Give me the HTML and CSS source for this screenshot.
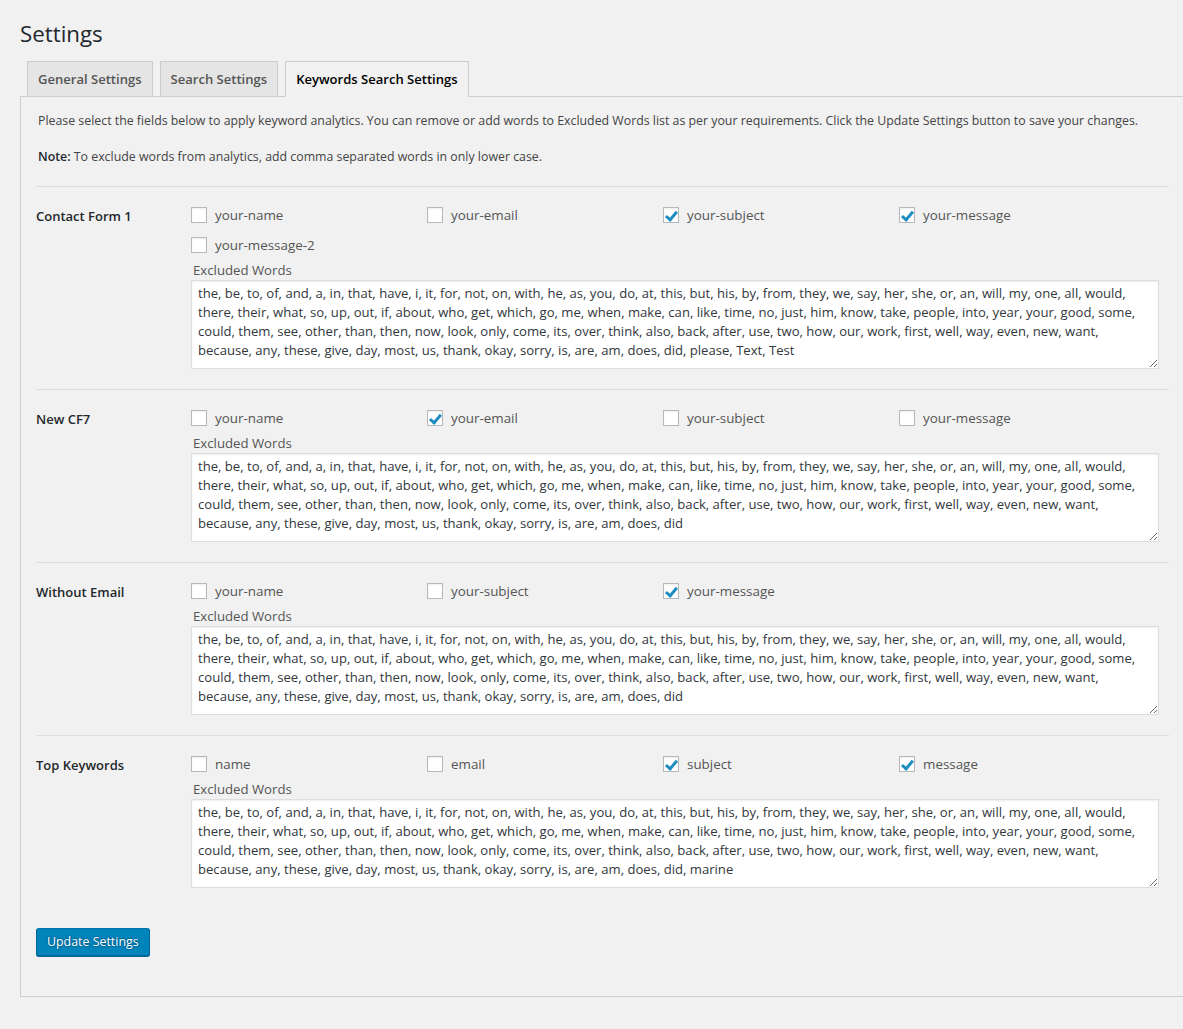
FILE: index.html
```html
<!DOCTYPE html>
<html lang="en">
<head>
	<meta charset="UTF-8">
	<title>Settings</title>
	<link rel="stylesheet" href="styles.css">
</head>
<body>
	<div class="wrap">
		<h1 class="page-title">Settings</h1>
		<div class="tabs">
			<a class="tab" href="#">General Settings</a>
			<a class="tab" href="#">Search Settings</a>
			<a class="tab active" href="#">Keywords Search Settings</a>
		</div>
		<div class="panel">
			<p class="intro">Please select the fields below to apply keyword analytics. You can remove or add words to Excluded Words list as per your requirements. Click the Update Settings button to save your changes.</p>
			<p class="intro"><strong>Note:</strong> To exclude words from analytics, add comma separated words in only lower case.</p>

			<form class="keywords-form">
				<div class="form-row">
					<div class="form-label">Contact Form 1</div>
					<div class="form-fields">
						<div class="field-grid">
							<label class="field"><input type="checkbox">your-name</label>
							<label class="field"><input type="checkbox">your-email</label>
							<label class="field"><input type="checkbox" checked>your-subject</label>
							<label class="field"><input type="checkbox" checked>your-message</label>
							<label class="field"><input type="checkbox">your-message-2</label>
						</div>
						<div class="words-label">Excluded Words</div>
						<textarea class="words">the, be, to, of, and, a, in, that, have, i, it, for, not, on, with, he, as, you, do, at, this, but, his, by, from, they, we, say, her, she, or, an, will, my, one, all, would,
there, their, what, so, up, out, if, about, who, get, which, go, me, when, make, can, like, time, no, just, him, know, take, people, into, year, your, good, some,
could, them, see, other, than, then, now, look, only, come, its, over, think, also, back, after, use, two, how, our, work, first, well, way, even, new, want,
because, any, these, give, day, most, us, thank, okay, sorry, is, are, am, does, did, please, Text, Test</textarea>
					</div>
				</div>

				<div class="form-row">
					<div class="form-label">New CF7</div>
					<div class="form-fields">
						<div class="field-grid">
							<label class="field"><input type="checkbox">your-name</label>
							<label class="field"><input type="checkbox" checked>your-email</label>
							<label class="field"><input type="checkbox">your-subject</label>
							<label class="field"><input type="checkbox">your-message</label>
						</div>
						<div class="words-label">Excluded Words</div>
						<textarea class="words">the, be, to, of, and, a, in, that, have, i, it, for, not, on, with, he, as, you, do, at, this, but, his, by, from, they, we, say, her, she, or, an, will, my, one, all, would,
there, their, what, so, up, out, if, about, who, get, which, go, me, when, make, can, like, time, no, just, him, know, take, people, into, year, your, good, some,
could, them, see, other, than, then, now, look, only, come, its, over, think, also, back, after, use, two, how, our, work, first, well, way, even, new, want,
because, any, these, give, day, most, us, thank, okay, sorry, is, are, am, does, did</textarea>
					</div>
				</div>

				<div class="form-row">
					<div class="form-label">Without Email</div>
					<div class="form-fields">
						<div class="field-grid">
							<label class="field"><input type="checkbox">your-name</label>
							<label class="field"><input type="checkbox">your-subject</label>
							<label class="field"><input type="checkbox" checked>your-message</label>
						</div>
						<div class="words-label">Excluded Words</div>
						<textarea class="words">the, be, to, of, and, a, in, that, have, i, it, for, not, on, with, he, as, you, do, at, this, but, his, by, from, they, we, say, her, she, or, an, will, my, one, all, would,
there, their, what, so, up, out, if, about, who, get, which, go, me, when, make, can, like, time, no, just, him, know, take, people, into, year, your, good, some,
could, them, see, other, than, then, now, look, only, come, its, over, think, also, back, after, use, two, how, our, work, first, well, way, even, new, want,
because, any, these, give, day, most, us, thank, okay, sorry, is, are, am, does, did</textarea>
					</div>
				</div>

				<div class="form-row">
					<div class="form-label">Top Keywords</div>
					<div class="form-fields">
						<div class="field-grid">
							<label class="field"><input type="checkbox">name</label>
							<label class="field"><input type="checkbox">email</label>
							<label class="field"><input type="checkbox" checked>subject</label>
							<label class="field"><input type="checkbox" checked>message</label>
						</div>
						<div class="words-label">Excluded Words</div>
						<textarea class="words">the, be, to, of, and, a, in, that, have, i, it, for, not, on, with, he, as, you, do, at, this, but, his, by, from, they, we, say, her, she, or, an, will, my, one, all, would,
there, their, what, so, up, out, if, about, who, get, which, go, me, when, make, can, like, time, no, just, him, know, take, people, into, year, your, good, some,
could, them, see, other, than, then, now, look, only, come, its, over, think, also, back, after, use, two, how, our, work, first, well, way, even, new, want,
because, any, these, give, day, most, us, thank, okay, sorry, is, are, am, does, did, marine</textarea>
					</div>
				</div>

				<p class="submit"><button type="button" class="button-primary">Update Settings</button></p>
			</form>
		</div>
	</div>
</body>
</html>
```

FILE: styles.css
```css
html, body {
	margin: 0;
	padding: 0;
	background: #f1f1f1;
}
body {
	font-family: "Open Sans", "Noto Sans", sans-serif;
	font-size: 12.35px;
	color: #444;
	overflow: hidden;
}
.wrap {
	padding: 10px 0 0 20px;
}
.page-title {
	font-size: 22.3px;
	font-weight: 400;
	line-height: 29px;
	color: #23282d;
	margin: 0;
	padding: 9px 0 4px 0;
}
.tabs {
	display: flex;
	gap: 7px;
	padding: 9px 0 0 7px;
	position: relative;
	z-index: 1;
}
.tab {
	display: block;
	padding: 5px 10px;
	font-size: 13.05px;
	line-height: 24px;
	font-weight: 600;
	color: #555;
	background: #e5e5e5;
	border: 1px solid #ccc;
	border-bottom: none;
	text-decoration: none;
}
.tab.active {
	color: #000;
	background: #f1f1f1;
	border-bottom: 1px solid #f1f1f1;
	margin-bottom: -1px;
}
.panel {
	border: 1px solid #ccc;
	margin-right: -2px;
	padding: 14px 15px 40px 15px;
}
.intro {
	margin: 0 0 16px 2px;
	line-height: 20px;
}
.intro strong {
	font-weight: 600;
	color: #23282d;
}
.keywords-form {
	margin-top: 19px;
}
.form-row {
	display: flex;
	border-top: 1px solid #dcdcdc;
	padding: 20px 0 20px 0;
}
.form-label {
	width: 155px;
	flex: none;
	font-size: 13px;
	font-weight: 600;
	line-height: 18px;
	color: #23282d;
}
.form-fields {
	flex: 1;
}
.field-grid {
	display: grid;
	grid-template-columns: repeat(4, 236px);
	row-gap: 14px;
}
.field {
	display: flex;
	align-items: center;
	height: 16px;
	font-size: 13.4px;
	color: #555;
}
.field input {
	-webkit-appearance: none;
	appearance: none;
	position: relative;
	width: 16px;
	height: 16px;
	margin: 0 8px 0 0;
	border: 1px solid #b4b9be;
	background: #fff;
	box-shadow: inset 0 1px 2px rgba(0, 0, 0, 0.07);
	flex: none;
}
.field input:checked::before {
	content: "";
	position: absolute;
	left: 4px;
	top: 1px;
	width: 4px;
	height: 9px;
	border-right: 3px solid #1e8cbe;
	border-bottom: 3px solid #1e8cbe;
	transform: rotate(40deg);
}
.words-label {
	margin-top: 8px;
	margin-left: 2px;
	font-size: 13.2px;
	line-height: 19px;
	color: #555;
}
.words {
	display: block;
	box-sizing: border-box;
	width: calc(100% - 10px);
	height: 89px;
	margin: 0;
	padding: 3px 6px 2px;
	border: 1px solid #ddd;
	box-shadow: inset 0 1px 2px rgba(0, 0, 0, 0.07);
	background: #fff;
	font-family: "Open Sans", "Noto Sans", sans-serif;
	font-size: 13.1px;
	line-height: 19px;
	color: #32373c;
	overflow: hidden;
	white-space: pre-wrap;
}
.form-row:last-of-type {
	padding-bottom: 0;
}
.submit {
	margin: 40px 0 0 0;
}
.button-primary {
	font-family: "Open Sans", "Noto Sans", sans-serif;
	font-size: 12.4px;
	line-height: 26px;
	height: 28px;
	padding: 0 10px 1px;
	color: #fff;
	background: #0085ba;
	border: 1px solid #0073aa;
	border-color: #0073aa #006799 #006799;
	border-radius: 3px;
	box-shadow: 0 1px 0 #006799;
	text-shadow: 0 -1px 1px #006799, 1px 0 1px #006799, 0 1px 1px #006799, -1px 0 1px #006799;
	cursor: pointer;
}
```
